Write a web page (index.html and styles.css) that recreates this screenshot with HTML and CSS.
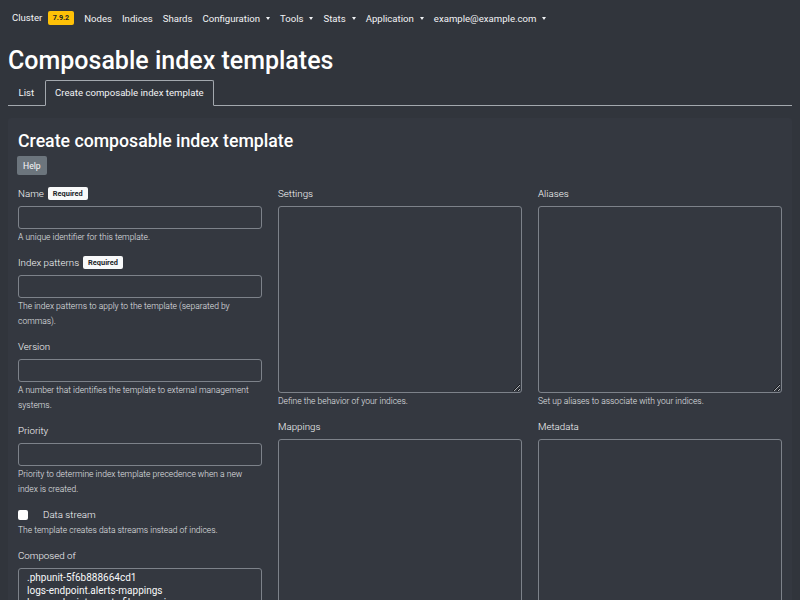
FILE: index.html
```html
<!DOCTYPE html>
<html lang="en">
<head>
    <meta charset="UTF-8">
    <meta name="viewport" content="width=device-width, initial-scale=1.0">
    <title>Composable index templates</title>
    <link rel="stylesheet" href="styles.css">
</head>
<body>
    <nav class="navbar">
        <a class="nav-link">Cluster <span class="badge badge-version">7.9.2</span></a>
        <a class="nav-link">Nodes</a>
        <a class="nav-link">Indices</a>
        <a class="nav-link">Shards</a>
        <a class="nav-link dropdown">Configuration</a>
        <a class="nav-link dropdown">Tools</a>
        <a class="nav-link dropdown">Stats</a>
        <a class="nav-link dropdown">Application</a>
        <a class="nav-link dropdown">example@example.com</a>
    </nav>

    <div class="container">
        <h1 class="page-title">Composable index templates</h1>

        <div class="tabs">
            <a class="tab">List</a>
            <a class="tab active">Create composable index template</a>
        </div>

        <div class="card">
            <h3 class="card-title">Create composable index template</h3>
            <button class="btn-help" type="button">Help</button>

            <form class="form-grid">
                <div class="col">
                    <div class="form-group">
                        <label class="form-label">Name <span class="badge badge-required">Required</span></label>
                        <input class="form-control" type="text">
                        <small class="form-text">A unique identifier for this template.</small>
                    </div>
                    <div class="form-group">
                        <label class="form-label">Index patterns <span class="badge badge-required">Required</span></label>
                        <input class="form-control" type="text">
                        <small class="form-text">The index patterns to apply to the template (separated by commas).</small>
                    </div>
                    <div class="form-group">
                        <label class="form-label">Version</label>
                        <input class="form-control" type="number">
                        <small class="form-text">A number that identifies the template to external management systems.</small>
                    </div>
                    <div class="form-group">
                        <label class="form-label">Priority</label>
                        <input class="form-control" type="number">
                        <small class="form-text">Priority to determine index template precedence when a new index is created.</small>
                    </div>
                    <div class="form-group">
                        <label class="form-check">
                            <input class="form-check-input" type="checkbox">
                            Data stream
                        </label>
                        <small class="form-text">The template creates data streams instead of indices.</small>
                    </div>
                    <div class="form-group">
                        <label class="form-label">Composed of</label>
                        <div class="listbox">
                            <div class="option">.phpunit-5f6b888664cd1</div>
                            <div class="option">logs-endpoint.alerts-mappings</div>
                            <div class="option">logs-endpoint.events.file-mappings</div>
                            <div class="option">logs-endpoint.events.library-mappings</div>
                            <div class="option">logs-endpoint.events.network-mappings</div>
                            <div class="option">logs-endpoint.events.process-mappings</div>
                            <div class="option">logs-endpoint.events.registry-mappings</div>
                        </div>
                    </div>
                </div>

                <div class="col">
                    <div class="form-group">
                        <label class="form-label">Settings</label>
                        <textarea class="form-control textarea"></textarea>
                        <small class="form-text">Define the behavior of your indices.</small>
                    </div>
                    <div class="form-group">
                        <label class="form-label">Mappings</label>
                        <textarea class="form-control textarea"></textarea>
                    </div>
                </div>

                <div class="col">
                    <div class="form-group">
                        <label class="form-label">Aliases</label>
                        <textarea class="form-control textarea"></textarea>
                        <small class="form-text">Set up aliases to associate with your indices.</small>
                    </div>
                    <div class="form-group">
                        <label class="form-label">Metadata</label>
                        <textarea class="form-control textarea"></textarea>
                    </div>
                </div>
            </form>
        </div>
    </div>
</body>
</html>
```

FILE: styles.css
```css
body {
    font-family: Roboto, "Liberation Sans", sans-serif;
    margin: 0;
    padding: 0;
    background-color: #31353c;
    color: #f8f9fa;
    overflow: hidden;
}

.navbar {
    display: flex;
    align-items: center;
    height: 36px;
    padding: 0 7px;
}

.nav-link {
    display: flex;
    align-items: center;
    padding: 0 5px;
    font-size: 9.6px;
    color: #f1f3f5;
    white-space: pre;
}

.dropdown::after {
    content: "";
    margin-left: 6px;
    border-top: 3px solid #f1f3f5;
    border-left: 2.5px solid transparent;
    border-right: 2.5px solid transparent;
}

.badge {
    display: inline-block;
    font-weight: 700;
    border-radius: 2px;
    line-height: 1;
}

.badge-version {
    margin-left: 3px;
    padding: 3px 5px;
    font-size: 7.2px;
    background-color: #ffc107;
    color: #212529;
}

.badge-required {
    margin-left: 4px;
    padding: 3px 5px;
    font-size: 7.4px;
    background-color: #f8f9fa;
    color: #212529;
}

.container {
    padding: 0 8px;
}

.page-title {
    margin: 10px 0 5px;
    font-size: 25px;
    line-height: 29px;
    font-weight: 500;
    color: #ffffff;
}

.tabs {
    display: flex;
    border-bottom: 1px solid #a3a8ae;
}

.tab {
    padding: 5px 9.5px;
    margin-bottom: -1px;
    font-size: 9.6px;
    line-height: 14px;
    border: 1px solid transparent;
    border-radius: 2px 2px 0 0;
    color: #f1f3f5;
}

.tab.active {
    border-color: #a3a8ae #a3a8ae #31353c;
    background-color: #31353c;
}

.card {
    margin-top: 12px;
    padding: 13px 10px 20px;
    background-color: #343840;
    border-radius: 3px;
}

.card-title {
    margin: 0 0 5px;
    font-size: 17.7px;
    line-height: 20px;
    font-weight: 500;
    color: #ffffff;
}

.btn-help {
    display: block;
    height: 19px;
    padding: 0 6px;
    margin-left: -1px;
    border: none;
    border-radius: 2px;
    background-color: #6c757d;
    color: #f8f9fa;
    font-family: inherit;
    font-size: 8.6px;
}

.form-grid {
    display: grid;
    grid-template-columns: repeat(3, 1fr);
    column-gap: 16px;
    margin-top: 11px;
}

.form-group {
    margin-bottom: 10px;
}

.form-label {
    display: flex;
    align-items: center;
    height: 15px;
    margin-bottom: 5px;
    font-size: 9.75px;
    font-weight: 300;
}

.form-control {
    display: block;
    width: 100%;
    height: 23px;
    box-sizing: border-box;
    margin: 0;
    padding: 3px 8px;
    border: 1px solid #7d828a;
    border-radius: 3px;
    background-color: transparent;
    color: #f8f9fa;
    font-family: inherit;
    font-size: 10px;
}

.textarea {
    height: 187px;
}

.form-text {
    display: block;
    margin-top: 1px;
    font-size: 8.5px;
    font-weight: 300;
    line-height: 15px;
    color: #e3e5e8;
}

.form-check {
    display: flex;
    align-items: center;
    height: 15px;
    font-size: 9.75px;
    font-weight: 300;
}

.form-check-input {
    appearance: none;
    width: 10px;
    height: 10px;
    margin: 0 15px 0 0;
    border-radius: 2px;
    background-color: #ffffff;
}

.listbox {
    height: 120px;
    box-sizing: border-box;
    padding: 3px 8px;
    border: 1px solid #7d828a;
    border-radius: 3px;
    overflow: hidden;
}

.option {
    font-size: 10px;
    line-height: 12.7px;
}
```
